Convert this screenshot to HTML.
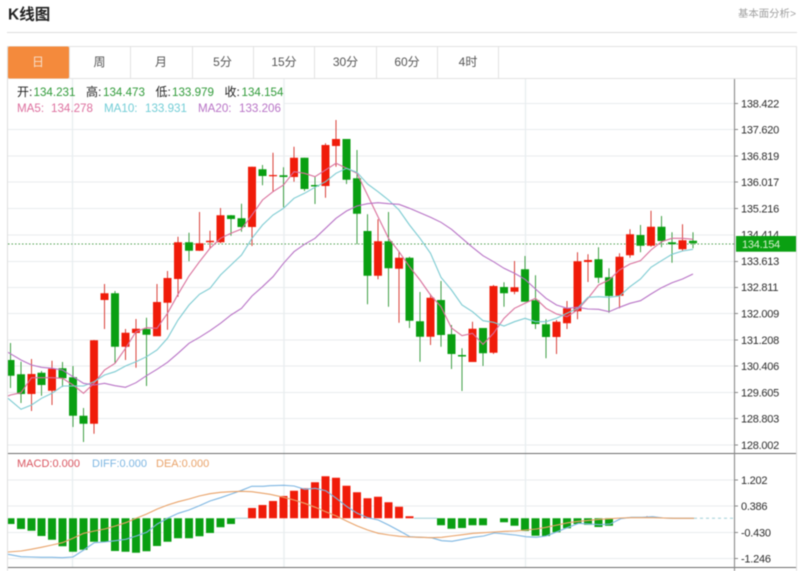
<!DOCTYPE html>
<html><head><meta charset="utf-8"><style>
html,body{margin:0;padding:0;background:#fff;width:800px;height:571px;overflow:hidden}
svg{display:block;filter:blur(.45px)}
text{font-family:"Liberation Sans","Noto Sans CJK SC",sans-serif;font-size:12px}
.ax{font-size:11px;letter-spacing:-.25px;fill:#2c2c2c}
.tab{font-size:12px;fill:#555;text-anchor:middle}
.v{font-size:11.6px;fill:#2f9a38}
.k{fill:#222}
</style></head><body>
<svg width="800" height="571" viewBox="0 0 800 571" xmlns="http://www.w3.org/2000/svg">
<rect width="800" height="571" fill="#fff"/>
<text x="8" y="19.5" style="font-size:15.5px;font-weight:bold" fill="#222">K线图</text>
<text x="738" y="17" style="font-size:10.4px" fill="#a0a0a0">基本面分析&gt;</text>
<path d="M7 32.5H797" stroke="#dcdcdc" fill="none"/>

<!-- grid -->
<path d="M284 103.5H735M8 129.5H735M8 156H735M8 182H735M8 208.5H735M8 235H735M8 261.5H735M8 287.5H735M8 313.5H735M8 340H735M8 366H735M8 392.5H735M8 418.5H735M8 445H735M8 480H735M8 506H735M8 532.5H735M8 558.5H735" stroke="#e9ecee" fill="none"/>
<path d="M72.5 79V567M284 79V567M525.5 79V567" stroke="#e9eef0" stroke-width="1.4" fill="none"/>
<path d="M8 244H735" stroke="#4f9f4f" stroke-dasharray="1.5 2" fill="none"/>

<!-- wicks -->
<path fill="none" stroke="#3f9f45" stroke-width="1" d="M10.5 343V388M21 361.7V403M41.5 371V395.7M62.5 362V387M73 366V427M83.5 408V442M115 291V363M146.5 317.7V386M189 232.7V261.3M231 215V235.7M241.5 203.7V231.7M262.5 165V185.3M283.5 167.3V207.3M304.5 157.7V191M315 176.7V204M346.5 139V184M357 150V244.3M367.5 214.3V304.3M388.5 212V306.7M409.5 256.7V328M420 292V361.7M441 281V346.7M451.5 325V369M462 348.3V391M483 328V366M504 282.3V306.7M525 256V301.7M535.5 275.3V329M546 319.3V358.3M598.5 247.3V283M609 268.3V312.7M640.5 225V252.3M661.5 216V247.3M672 232.3V262.7M693 232.3V248.3"/>
<path fill="none" stroke="#d9403a" stroke-width="1" d="M31.5 359V411M52 360.7V405M94 340V433.7M104.5 284V329M125.5 329V360M136 319V367.7M157 284V336M167.5 271V329.7M178 236.7V296.7M199.5 212V251M210 230.7V248M220.5 208V243.3M252 166.7V246M273 152.7V191.7M294 146.7V181.7M325.5 143.3V197.7M336 120V166.7M378 219.3V279.3M399 251.7V322.7M430.5 294V345M472.5 321.7V362M493.5 285V354M514.5 261V294.3M556.5 320V354M567 301V329M577.5 252.3V319.3M588 254.3V282M619.5 253.3V308.3M630 229.3V257.7M651 210.7V246.7M682.5 224.3V251"/>

<!-- bodies -->
<path fill="none" stroke="#0a9f12" stroke-width="8" d="M10.5 360V375.7M21 374.3V394M41.5 372.7V385M62.5 368.3V378.3M73 377.3V415.7M83.5 415.7V423.7M115 293.3V346.7M146.5 329V334.7M189 242.3V250.7M231 215.3V219M241.5 218.3V227M262.5 169.3V176M283.5 175.2V177M304.5 157.7V189M315 185V186.5M346.5 139V179.7M357 178.3V213.7M367.5 231V275.7M388.5 241.3V268.3M409.5 257.7V320.7M420 321.3V336.7M441 300V335M451.5 334.3V354M462 355V356.5M483 328V353.3M504 287V293.3M525 269.3V301.7M535.5 300.3V324M546 324.3V337M598.5 259.3V277.7M609 277.3V296M640.5 235V245.7M661.5 226.7V241M672 242.3V244.3M693 240.7V243.3"/>
<path fill="none" stroke="#f01c0a" stroke-width="8" d="M31.5 374V394M52 368.7V390.7M94 340.3V423.7M104.5 293.3V300M125.5 332.7V346.7M136 328.7V333M157 302V336.3M167.5 278V302.7M178 242.3V279M199.5 243.3V250.7M210 240.7V242.3M220.5 215.3V242.3M252 166.7V227M273 175V176.2M294 157.7V177M325.5 145V186M336 139V146M378 241.3V275.7M399 257.7V268.7M430.5 297.7V336.7M472.5 328.7V362M493.5 286V352.7M514.5 287.3V291.7M556.5 321.7V337M567 308.3V323.3M577.5 261.3V311.3M588 260V262M619.5 256.7V295.7M630 234.3V255.3M651 226.7V245.7M682.5 240.3V249.3"/>

<!-- MA lines -->
<polyline fill="none" stroke="#d9709c" stroke-width="1.1" points="8,396 10.5,395 21,392.7 31.5,377.7 41.5,377.7 52,377.7 62.5,378.3 73,385 83.5,393.3 94,383.3 104.5,370 115,363.3 125.5,348.3 136,331.7 146.5,327.7 157,328.3 167.5,313.3 178,294.3 189,276 199.5,261.7 210,248.3 220.5,238.3 231,233.3 241.5,229 252,215 262.5,200 273,191.7 283.5,185 294,171.7 304.5,173.3 315,176.7 325.5,170 336,163.3 346.5,168.3 357,173.3 367.5,195 378,216.7 388.5,238.3 399,251.7 409.5,266.7 420,280 430.5,295 441,306.7 451.5,328 462,335.7 472.5,333.3 483,344.3 493.5,333.3 504,318.3 514.5,308.3 525,303.3 535.5,298.3 546,308.3 556.5,314 567,316.7 577.5,310 588,298.3 598.5,285 609,280 619.5,270 630,264 640.5,260.7 651,250 661.5,241.7 672,238.3 682.5,238.3 693,239.3"/>
<polyline fill="none" stroke="#7ccbd2" stroke-width="1.1" points="8,398.3 21,409.3 31.5,405 41.5,398.3 52,393.3 62.5,386 73,386 83.5,386 94,381.7 104.5,375 115,371.7 125.5,366 136,361.7 146.5,356.7 157,350 167.5,338.3 178,320 189,305 199.5,294.3 210,288.3 220.5,275 231,265 241.5,255 252,238.3 262.5,225 273,215 283.5,208.3 294,198.3 304.5,193.3 315,187.3 325.5,181.7 336,173.3 346.5,168.3 357,172.3 367.5,184 378,191.7 388.5,200 399,210 409.5,225 420,238.3 430.5,253.3 441,277.3 451.5,290 462,305 472.5,311.7 483,320.7 493.5,322.3 504,326 514.5,321.7 525,318.3 535.5,321.7 546,321.7 556.5,318.3 567,313.3 577.5,308.3 588,297.3 598.5,296.7 609,297.3 619.5,296 630,286.7 640.5,279 651,267.3 661.5,260.7 672,254.3 682.5,251 693,249.3"/>
<polyline fill="none" stroke="#b873c6" stroke-width="1.1" points="8,352.3 21,360 31.5,365 41.5,367.3 52,368.3 62.5,370 73,376.7 83.5,383.3 94,385 104.5,383.3 115,385.7 125.5,387.3 136,382.7 146.5,375.7 157,369.3 167.5,362.3 178,353.3 189,343.3 199.5,337.3 210,330.7 220.5,323.3 231,315 241.5,308.3 252,296 262.5,286.7 273,276.7 283.5,263.3 294,251.7 304.5,244.3 315,238.3 325.5,228.3 336,218.3 346.5,211 357,206 367.5,203.7 378,202.7 388.5,203.7 399,204.3 409.5,208.3 420,212.7 430.5,217.3 441,222.3 451.5,229.3 462,238.3 472.5,247.3 483,255.7 493.5,261.7 504,268.3 514.5,273.3 525,279.3 535.5,289 546,298.3 556.5,305 567,308.3 577.5,307.3 588,309 598.5,309.3 609,311.7 619.5,307.3 630,303.3 640.5,300.7 651,294 661.5,287.7 672,282.7 682.5,279 693,274"/>

<!-- MACD bars -->
<path fill="none" stroke="#0a9f12" stroke-width="8" d="M10.5 518.3V524M21 518.3V529M31.5 518.3V530.7M41.5 518.3V536M52 518.3V539.7M62.5 518.3V546.3M73 518.3V551.7M83.5 518.3V549.7M94 518.3V541.7M104.5 518.3V541.7M115 518.3V551M125.5 518.3V551.7M136 518.3V552.7M146.5 518.3V551.3M157 518.3V546M167.5 518.3V541.7M178 518.3V538.3M189 518.3V538.3M199.5 518.3V536.3M210 518.3V533M220.5 518.3V527.3M231 518.3V524M441 518.3V525.3M451.5 518.3V528.7M462 518.3V528M472.5 518.3V525.3M483 518.3V525.3M504 518.3V522.3M514.5 518.3V525.7M525 518.3V531M535.5 518.3V535.7M546 518.3V536M556.5 518.3V532.3M567 518.3V528.3M577.5 518.3V524M588 518.3V524.7M598.5 518.3V527M609 518.3V525.7"/>
<path fill="none" stroke="#f01c0a" stroke-width="8" d="M252 508V518.3M262.5 505V518.3M273 501V518.3M283.5 496V518.3M294 490.7V518.3M304.5 488.3V518.3M315 482.3V518.3M325.5 476.3V518.3M336 477.7V518.3M346.5 485.7V518.3M357 492.3V518.3M367.5 498.3V518.3M378 496.7V518.3M388.5 502.3V518.3M399 506.7V518.3M409.5 516.3V518.3"/>
<path fill="none" stroke="#d98a80" stroke-width="1" d="M647 516V518M655 516.5V518"/>
<path fill="none" stroke="#9fcfd8" stroke-width="1" stroke-dasharray="3 3" d="M694 518.3H735"/>
<path fill="none" stroke="#9fcfd8" stroke-width="1" d="M235 518.3H248M414 518.3H437"/>

<!-- DIFF, DEA -->
<polyline fill="none" stroke="#7db6e2" stroke-width="1.1" points="8,554.3 21,556.7 31,557 41.3,557.3 52,557.3 62.3,557.7 73,557 83.7,550 94.3,542.7 104.7,542 115.3,540.7 125.7,539.3 136.3,536 146.7,532.3 157.3,524 167.7,518.3 178.3,513.3 189,510 199.3,505.7 210,501 220.7,497.7 231.3,494 241.7,490.3 251.7,486.3 263.3,486.3 270,485.7 283.7,485.3 294,486 304.7,489.3 315.3,488.3 325.7,490.7 336.3,498.3 347,506.7 357.3,513.3 367.7,517.7 378.3,520 389,525.3 399.7,531 410,536.7 420.7,537.3 431.3,537.7 441.7,540.7 452,541.3 462.7,539.3 473.3,537.3 483.7,536 494.3,533 505,534 515.3,535 526,536.7 536.3,537.3 546,536 557.3,531.7 568.3,527.3 578.7,523.3 589.3,524 599.7,524.7 610.3,524 620.7,518.7 631.3,517.3 642,517.3 652.7,516.7 663.3,518 674,518.3 694,518.3"/>
<polyline fill="none" stroke="#e9a268" stroke-width="1.1" points="8,552 21,551 31,549.3 41.3,547.3 52,545 62.3,542.7 73,538.3 83.7,533.3 94.3,531 104.7,529 115.3,526 125.7,522.7 136.3,518.3 146.7,514 157.3,509 167.7,505 178.3,501.7 189,499 199.3,496 210,493.7 220.7,492.3 231.3,491.7 241.7,491.3 251.7,491.7 263.3,493.3 270,494.3 283.7,497.3 294,500 304.7,503.3 315.3,507.3 325.7,511.7 336.3,516 347,521.3 357.3,526 367.7,530 378.3,533.3 389,535 399.7,536.3 410,537 420.7,537.3 431.3,537.7 441.7,537.3 452,536 462.7,534.7 473.3,533.3 483.7,532.7 494.3,532 505,531.3 515.3,531 526,530 536.3,529 546,527.3 557.3,525 568.3,522.7 578.7,521.3 589.3,520.3 599.7,519.3 610.3,518.7 620.7,518 631.3,517.7 642,517.7 652.7,517.7 663.3,518 674,518.3 694,518.3"/>

<!-- masks + frame -->
<rect x="0" y="46" width="7.5" height="525" fill="#fff"/>
<rect x="736" y="455" width="60" height="112" fill="#fff"/>
<path d="M7.5 46V571M796.5 46V571" stroke="#dedede" fill="none"/>
<path d="M8 46.5H797M8 78.5H797M69.5 47V78M130.5 47V78M192.5 47V78M253.5 47V78M314.5 47V78M376.5 47V78M437.5 47V78M498.5 47V78" stroke="#e2e2e2" fill="none"/>
<rect x="8" y="46.5" width="61" height="32" rx="1.5" fill="#f48a3c"/>
<path d="M8 453.5H796M8 567.5H796" stroke="#6e6e6e" fill="none"/>
<path d="M734.5 79V571" stroke="#8a8a8a" fill="none" stroke-width="1.1"/>
<path d="M735 103.5h3M735 129.5h3M735 156h3M735 182h3M735 208.5h3M735 261.5h3M735 287.5h3M735 313.5h3M735 340h3M735 366h3M735 392.5h3M735 418.5h3M735 445h3M735 480h3M735 506h3M735 532.5h3M735 558.5h3" stroke="#888" fill="none"/>

<!-- tabs -->
<text x="38" y="66" class="tab" style="fill:#f8e0cc">日</text>
<text x="99.5" y="66" class="tab">周</text>
<text x="161" y="66" class="tab">月</text>
<text x="222.5" y="66" class="tab">5分</text>
<text x="284" y="66" class="tab">15分</text>
<text x="345.5" y="66" class="tab">30分</text>
<text x="407" y="66" class="tab">60分</text>
<text x="468" y="66" class="tab">4时</text>

<!-- info -->
<text x="17" y="96" class="k">开:</text><text x="33.5" y="96" class="v">134.231</text>
<text x="86" y="96" class="k">高:</text><text x="103" y="96" class="v">134.473</text>
<text x="155.5" y="96" class="k">低:</text><text x="172" y="96" class="v">133.979</text>
<text x="224.5" y="96" class="k">收:</text><text x="241.5" y="96" class="v">134.154</text>
<text x="17" y="112" style="font-size:11.6px" fill="#dd6f9e">MA5:</text><text x="51" y="112" style="font-size:11.6px" fill="#dd6f9e">134.278</text>
<text x="104" y="112" style="font-size:11.6px" fill="#72cdd6">MA10:</text><text x="145" y="112" style="font-size:11.6px" fill="#72cdd6">133.931</text>
<text x="198" y="112" style="font-size:11.6px" fill="#b873c6">MA20:</text><text x="239" y="112" style="font-size:11.6px" fill="#b873c6">133.206</text>

<!-- axis labels -->
<g>
<text x="741" y="107.5" class="ax">138.422</text>
<text x="741" y="133.5" class="ax">137.620</text>
<text x="741" y="160" class="ax">136.819</text>
<text x="741" y="186" class="ax">136.017</text>
<text x="741" y="212.5" class="ax">135.216</text>
<text x="741" y="238.5" class="ax">134.414</text>
<text x="741" y="265" class="ax">133.613</text>
<text x="741" y="291" class="ax">132.811</text>
<text x="741" y="317.5" class="ax">132.009</text>
<text x="741" y="344" class="ax">131.208</text>
<text x="741" y="370" class="ax">130.406</text>
<text x="741" y="396.5" class="ax">129.605</text>
<text x="741" y="422.5" class="ax">128.803</text>
<text x="741" y="449" class="ax">128.002</text>
<text x="741" y="484" class="ax">1.202</text>
<text x="741" y="510" class="ax">0.386</text>
<text x="741" y="536.5" class="ax">-0.430</text>
<text x="741" y="562.5" class="ax">-1.246</text>
</g>
<rect x="736" y="236" width="60" height="15.7" fill="#0aa012"/>
<text x="742" y="248" class="ax" style="fill:#d8f0d0">134.154</text>

<!-- MACD labels -->
<text x="17" y="467" style="font-size:11px" fill="#d9545f">MACD:0.000</text>
<text x="92" y="467" style="font-size:11px" fill="#7db6e2">DIFF:0.000</text>
<text x="156" y="467" style="font-size:11px" fill="#e9a268">DEA:0.000</text>
</svg>
</body></html>
